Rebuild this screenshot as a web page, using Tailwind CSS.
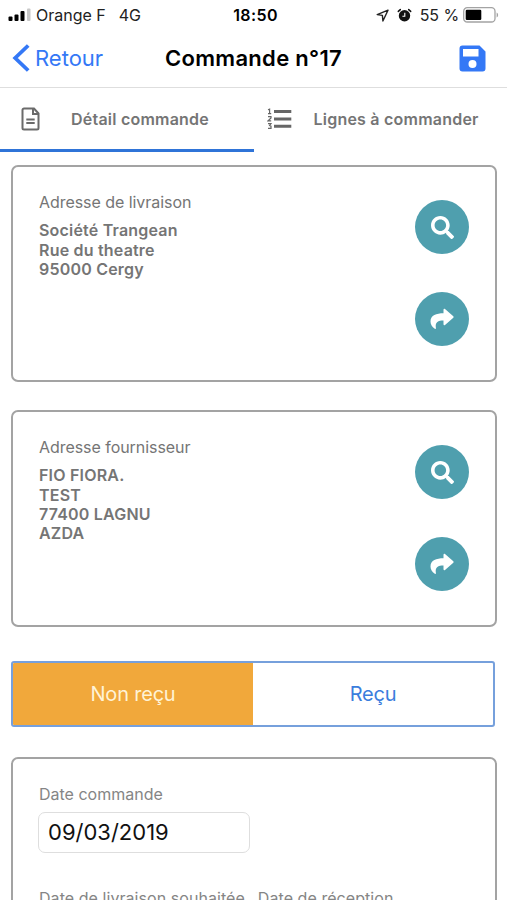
<!DOCTYPE html>
<html lang="fr">

<head>
    <meta charset="UTF-8">
    <meta name="viewport" content="width=device-width, initial-scale=1.0">
    <title>Commande n°17</title>
    <script src="https://cdn.jsdelivr.net/npm/@tailwindcss/browser@4"></script>
</head>

<body class="bg-white font-['Inter',sans-serif] text-[#757575]">
    <div class="flex h-[900px] w-[507px] flex-col overflow-hidden whitespace-nowrap">
        <!-- Status bar -->
        <div class="grid h-[30px] shrink-0 grid-cols-3 items-center px-2 text-[16px] text-[#222]">
            <div class="flex items-center">
                <svg class="mr-[5px] h-[14px] w-[23px]" viewBox="0 0 23 14">
                    <rect x="0.5" y="8.5" width="4" height="4.5" rx="1" fill="#000" />
                    <rect x="6.5" y="6.5" width="4" height="6.5" rx="1" fill="#000" />
                    <rect x="12.5" y="3" width="4" height="10" rx="1" fill="#000" />
                    <rect x="19" y="0.5" width="3.5" height="12.5" rx="1" fill="#c8c8c8" />
                </svg>
                <span>Orange F</span>
                <span class="ml-[13px]">4G</span>
            </div>
            <div class="pl-1 text-center font-semibold tracking-[0.4px] text-black">18:50</div>
            <div class="flex items-center justify-end">
                <svg class="mr-[8px] h-[13px] w-[13px]" viewBox="0 0 13 13" fill="none" stroke="#222" stroke-width="1.4" stroke-linejoin="round">
                    <path d="M12 1.200 1.200 5.600l5.200.8.5 5.600z" />
                </svg>
                <svg class="mr-[8px] h-[15px] w-[15px]" viewBox="0 0 15 15">
                    <circle cx="7.500" cy="7.800" r="5.700" fill="#111" />
                    <path d="M1.300 3.400 3.300 1.600M13.700 3.400l-2-1.800" stroke="#111" stroke-width="1.500" stroke-linecap="round" />
                    <path d="M7.800 4.800v3.500H5.400" fill="none" stroke="#fff" stroke-width="1.100" />
                </svg>
                <span class="tracking-[-0.1px]">55 %</span>
                <svg class="ml-[4px] h-[16px] w-[36px]" viewBox="0 0 36 16">
                    <rect x="0.700" y="0.700" width="31.300" height="14.300" rx="3.600" fill="none" stroke="#a3a3a3" stroke-width="1.300" />
                    <rect x="2.700" y="2.700" width="15.600" height="10.300" rx="1.200" fill="#000" />
                    <path d="M33.600 5.400c2 .7 2 4.300 0 5z" fill="#a3a3a3" />
                </svg>
            </div>
        </div>

        <!-- Navigation -->
        <div class="flex h-[58px] shrink-0 items-center justify-between border-b border-[#dedede] pr-[21px] pb-px pl-[12px]">
            <div class="flex w-[92px] items-center text-[22px] text-[#3478f6]">
                <svg class="mr-[5px] h-[28px] w-[18px]" viewBox="0 0 18 28" fill="none" stroke="#3478f6" stroke-width="3.800">
                    <path d="M16.200 1.500 3.200 14l13 12.500" />
                </svg>
                <span>Retour</span>
            </div>
            <div class="pl-[9px] text-[22px] font-semibold tracking-[0.3px] text-black">Commande n°17</div>
            <div class="flex w-[92px] justify-end">
                <svg class="h-[27px] w-[27px]" viewBox="0 0 27 27">
                    <path d="M3.500.5h17l6 6v17a3 3 0 0 1-3 3h-20a3 3 0 0 1-3-3v-20a3 3 0 0 1 3-3z" fill="#3478f6" />
                    <rect x="4" y="4" width="15.500" height="7.500" fill="#fff" />
                    <circle cx="13.500" cy="19" r="4" fill="#fff" />
                </svg>
            </div>
        </div>

        <!-- Tabs -->
        <div class="grid h-[64px] shrink-0 grid-cols-2 text-[16px] font-semibold tracking-[0.220px]">
            <div class="flex items-center border-b-[3px] border-[#2f74d8] pl-[21px]">
                <svg class="mr-[31px] h-[24px] w-[19px]" viewBox="0 0 19 24" fill="none" stroke="#6b6b6b" stroke-width="2">
                    <path d="M3 1.500h10l4.500 5v14.500a1.500 1.500 0 0 1-1.500 1.500H3A1.500 1.500 0 0 1 1.500 21V3A1.500 1.500 0 0 1 3 1.500z" />
                    <path d="M12 1.500V7h5.500M5.300 12.500h8.400M5.300 16h8.400" />
                </svg>
                <span>Détail commande</span>
            </div>
            <div class="flex items-center border-b-[3px] border-transparent pl-[13px]">
                <svg class="mr-[22px] h-[22px] w-[25px]" viewBox="0 0 25 22" stroke="#666">
                    <path d="M7 3.500h17.300M7 11h17.300M7 18.200h17.300" stroke-width="3" />
                    <path d="M1 1.800 2.600 1.200v4.400M1 5.600h3.200M1 8.600h3v1.400L1.100 12.800h3.100M1 15.600h3l-1.400 1.900 1.400.6v2.200H1" fill="none" stroke-width="1.200" />
                </svg>
                <span>Lignes à commander</span>
            </div>
        </div>

        <!-- Content -->
        <div class="flex flex-col px-[11px] pt-[13px]">
            <div class="flex h-[217px] w-[486px] shrink-0 justify-between rounded-[7px] border-2 border-[#a3a3a3] py-[26px] pr-[26px] pl-[26px]">
                <div class="text-[16px] leading-[19.300px]">
                    <div class="mb-[9px] tracking-[-0.050px]">Adresse de livraison</div>
                    <div class="font-semibold tracking-[0.200px]">
                        <div>Société Trangean</div>
                        <div>Rue du theatre</div>
                        <div>95000 Cergy</div>
                    </div>
                </div>
                <div class="flex flex-col gap-[38px] pt-[7px]">
                    <div class="flex size-[54px] items-center justify-center rounded-full bg-[#4f9fae]">
                        <svg class="size-[23px]" viewBox="0 0 512 512" fill="#fff">
                            <path d="M505 442.700 405.300 343c-4.500-4.500-10.600-7-17-7H372c27.600-35.300 44-79.700 44-128C416 93.100 322.900 0 208 0S0 93.100 0 208s93.100 208 208 208c48.300 0 92.700-16.400 128-44v16.300c0 6.400 2.500 12.500 7 17l99.700 99.700c9.400 9.400 24.600 9.400 33.900 0l28.300-28.300c9.400-9.400 9.400-24.600.1-34zM208 336c-70.700 0-128-57.200-128-128 0-70.700 57.200-128 128-128 70.700 0 128 57.200 128 128 0 70.700-57.200 128-128 128z" />
                        </svg>
                    </div>
                    <div class="flex size-[54px] items-center justify-center rounded-full bg-[#4f9fae]">
                        <svg class="h-[22px] w-[24px]" viewBox="0 0 24 22" fill="#fff">
                            <path d="M13.500 1.800c0-1 .8-1.300 1.500-.7l8.300 7.200c.5.500.5 1 0 1.500L15 17c-.7.600-1.500.2-1.500-.7v-3.700c-5.300 0-8.600 1.600-7.600 7.500.1.900-.5 1.300-1.100.7C2 18.600.5 16.500.5 13.500.5 7 6.500 5.300 13.500 5.200z" />
                        </svg>
                    </div>
                </div>
            </div>

            <div class="mt-[28px] flex h-[217px] w-[486px] shrink-0 justify-between rounded-[7px] border-2 border-[#a3a3a3] py-[26px] pr-[26px] pl-[26px]">
                <div class="text-[16px] leading-[19.300px]">
                    <div class="mb-[9px] tracking-[-0.050px]">Adresse fournisseur</div>
                    <div class="font-semibold tracking-[0.200px]">
                        <div>FIO FIORA.</div>
                        <div>TEST</div>
                        <div>77400 LAGNU</div>
                        <div>AZDA</div>
                    </div>
                </div>
                <div class="flex flex-col gap-[38px] pt-[7px]">
                    <div class="flex size-[54px] items-center justify-center rounded-full bg-[#4f9fae]">
                        <svg class="size-[23px]" viewBox="0 0 512 512" fill="#fff">
                            <path d="M505 442.700 405.300 343c-4.500-4.500-10.600-7-17-7H372c27.600-35.300 44-79.700 44-128C416 93.100 322.900 0 208 0S0 93.100 0 208s93.100 208 208 208c48.300 0 92.700-16.400 128-44v16.300c0 6.400 2.500 12.500 7 17l99.700 99.700c9.400 9.400 24.600 9.400 33.900 0l28.300-28.300c9.400-9.400 9.400-24.600.1-34zM208 336c-70.700 0-128-57.200-128-128 0-70.700 57.200-128 128-128 70.700 0 128 57.200 128 128 0 70.700-57.200 128-128 128z" />
                        </svg>
                    </div>
                    <div class="flex size-[54px] items-center justify-center rounded-full bg-[#4f9fae]">
                        <svg class="h-[22px] w-[24px]" viewBox="0 0 24 22" fill="#fff">
                            <path d="M13.500 1.800c0-1 .8-1.300 1.500-.7l8.300 7.200c.5.500.5 1 0 1.500L15 17c-.7.600-1.500.2-1.500-.7v-3.700c-5.300 0-8.600 1.600-7.600 7.500.1.900-.5 1.300-1.100.7C2 18.600.5 16.500.5 13.500.5 7 6.500 5.300 13.500 5.200z" />
                        </svg>
                    </div>
                </div>
            </div>

            <div class="mt-[34px] grid h-[66px] w-[484px] shrink-0 grid-cols-2 overflow-hidden rounded-[3px] border-2 border-[#76a0dc] text-[20px]">
                <div class="flex items-center justify-center bg-[#f1a83b] tracking-[-0.200px] text-[#fff3d6]">Non reçu</div>
                <div class="flex items-center justify-center tracking-[-0.200px] text-[#3b7ddd]">Reçu</div>
            </div>

            <div class="mt-[30px] h-[217px] w-[486px] shrink-0 rounded-[7px] border-2 border-[#a3a3a3] pt-[26px] pl-[25px] text-[16px] leading-[19.300px] text-[#858585]">
                <div class="pl-px">Date commande</div>
                <div class="mt-[8px] flex h-[41px] w-[212px] items-center rounded-[7px] border border-[#dedede] pb-px pl-[9px] text-[22px] text-[#111]">09/03/2019</div>
                <div class="mt-[36px] flex gap-[13px] pl-px tracking-[0.060px]">
                    <span>Date de livraison souhaitée</span>
                    <span>Date de réception</span>
                </div>
            </div>
        </div>
    </div>
</body>

</html>
